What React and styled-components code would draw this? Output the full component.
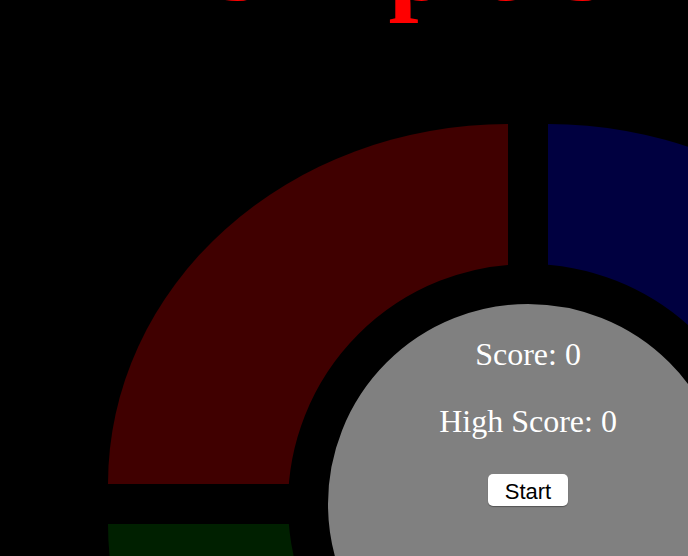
import React from "react";
import styled, { createGlobalStyle } from "styled-components";

const GlobalStyle = createGlobalStyle`
  html, body {
    margin: 0;
    padding: 0;
    background: #000;
    overflow: hidden;
  }
`;

const Page = styled.div`
  width: 1056px;
  height: 556px;
  overflow: hidden;
  background: #000;
`;

const Title = styled.h1`
  margin: -90px 0 106px;
  font-family: "Liberation Serif", "Times New Roman", serif;
  font-size: 108px;
  font-weight: bold;
  line-height: 108px;
  color: #ff0000;
  text-align: center;
  white-space: nowrap;
`;

const Board = styled.div`
  position: relative;
  width: 840px;
  margin: 0 auto;
  display: grid;
  grid-template-columns: 400px 400px;
  grid-template-rows: 360px 360px;
  gap: 40px;
`;

const radii = {
  tl: "100% 0 0 0",
  tr: "0 100% 0 0",
  bl: "0 0 0 100%",
  br: "0 0 100% 0",
};

const Pad = styled.div`
  background: ${(props) => props.color};
  border-radius: ${(props) => radii[props.corner]};
`;

const Hub = styled.div`
  position: absolute;
  left: 50%;
  top: 50%;
  transform: translate(-50%, -50%);
  width: 480px;
  height: 480px;
  box-sizing: border-box;
  border: 40px solid #000;
  border-radius: 50%;
  background: #808080;
  display: flex;
  flex-direction: column;
  align-items: center;
  padding-top: 32px;
`;

const ScoreLine = styled.div`
  font-family: "Liberation Serif", "Times New Roman", serif;
  font-size: 32px;
  line-height: 36px;
  color: #fff;
  white-space: nowrap;
  margin-bottom: ${(props) => props.gap}px;
`;

const StartButton = styled.button`
  height: 32px;
  box-sizing: border-box;
  padding: 4px 17px 0;
  border: none;
  border-radius: 5px;
  background: #fff;
  box-shadow: 0 1px 1px rgba(0, 0, 0, 0.35);
  font-family: "Liberation Sans", Arial, sans-serif;
  font-size: 22px;
  line-height: 28px;
  color: #000;
  cursor: pointer;
`;

export default function App() {
  const score = 0;
  const highScore = 0;

  return (
    <Page>
      <GlobalStyle />
      <Title>Simple Simon</Title>
      <Board>
        <Pad corner="tl" color="#400000" />
        <Pad corner="tr" color="#000040" />
        <Pad corner="bl" color="#002000" />
        <Pad corner="br" color="#404000" />
        <Hub>
          <ScoreLine gap={31}>Score: {score}</ScoreLine>
          <ScoreLine gap={35}>High Score: {highScore}</ScoreLine>
          <StartButton>Start</StartButton>
        </Hub>
      </Board>
    </Page>
  );
}
